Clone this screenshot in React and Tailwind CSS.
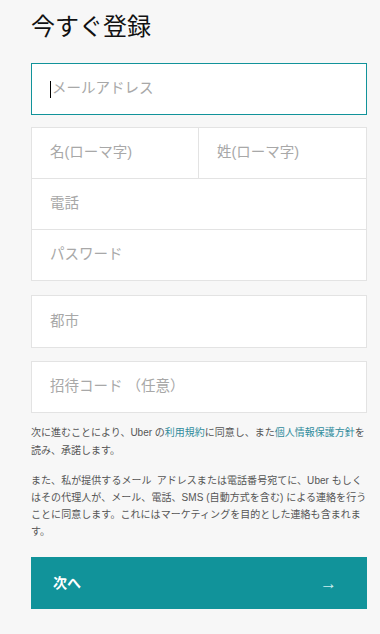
import React from "react";

const font = { fontFamily: '"Liberation Sans", "Noto Sans CJK JP", sans-serif' };

function Field({ label, className = "" }) {
  return (
    <div className={`flex items-center bg-white pl-[18px] text-[14.5px] text-[#a8a8a8] ${className}`}>
      {label}
    </div>
  );
}

export default function App() {
  return (
    <div className="min-h-[634px] w-[380px] bg-[#f7f7f7] pl-[31px] pr-[13px]" style={font}>
      <h1 className="pt-[11px] text-[24px] leading-[32px] font-normal text-[#111]">今すぐ登録</h1>

      <div className="mt-[20px] flex h-[52px] items-center border border-[#11939a] bg-white pl-[18px] text-[14.5px] text-[#a8a8a8]">
        <span className="mr-px inline-block h-[17px] w-px bg-black" />
        メールアドレス
      </div>

      <div className="mt-[12px] border border-[#e3e3e3] bg-white divide-y divide-[#e3e3e3]">
        <div className="flex h-[51px] divide-x divide-[#e3e3e3]">
          <Field label="名(ローマ字)" className="w-[167px]" />
          <Field label="姓(ローマ字)" className="flex-1" />
        </div>
        <Field label="電話" className="h-[51px]" />
        <Field label="パスワード" className="h-[50px]" />
      </div>

      <Field label="都市" className="mt-[14px] h-[53px] border border-[#e3e3e3]" />
      <Field label="招待コード （任意）" className="mt-[13px] h-[52px] border border-[#e3e3e3]" />

      <div className="mt-[11px] text-[10px] leading-[18px] text-[#555]">
        <p>
          次に進むことにより、Uber の<span className="text-[#2f8c9c]">利用規約</span>に同意し、また<span className="text-[#2f8c9c]">個人情報保護方針</span>を読み、承諾します。
        </p>
        <p className="mt-[12px] leading-[17px] tracking-[0.05px]">
          また、私が提供するメール{"\u2002"}アドレスまたは電話番号宛てに、Uber もしくはその代理人が、メール、電話、SMS (自動方式を含む) による連絡を行うことに同意します。これにはマーケティングを目的とした連絡も含まれます。
        </p>
      </div>

      <button className="mt-[17px] flex h-[52px] w-full items-center justify-between bg-[#11939a] pl-[22px] pr-[30px] text-white">
        <span className="text-[14px] font-bold">次へ</span>
        <span className="text-[17px] leading-none text-[#cdeeee]">→</span>
      </button>
    </div>
  );
}
